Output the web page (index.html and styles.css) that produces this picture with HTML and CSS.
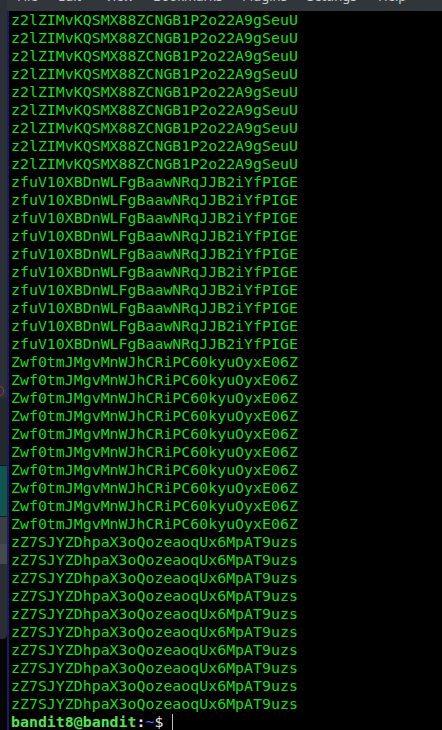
FILE: index.html
```html
<!DOCTYPE html>
<html>
<head>
<meta charset="utf-8">
<link rel="stylesheet" href="styles.css">
</head>
<body>
<div class="screen">
  <div class="desk">
    <div class="seg s1"></div>
    <div class="seg s2"><span class="redmark"></span></div>
    <div class="seg s3"></div>
    <div class="seg s4"></div>
    <div class="seg s5"></div>
    <div class="seg s6"></div>
    <div class="seg s7"></div>
    <div class="seg s8"></div>
  </div>
  <div class="window">
    <div class="menubar">
      <span class="mi m-file">File</span>
      <span class="mi m-edit">Edit</span>
      <span class="mi m-view">View</span>
      <span class="mi m-book">Bookmarks</span>
      <span class="mi m-plug">Plugins</span>
      <span class="mi m-set">Settings</span>
      <span class="mi m-help">Help</span>
    </div>
    <div class="term">
      <div class="line">z2lZIMvKQSMX88ZCNGB1P2o22A9gSeuU</div>
      <div class="line">z2lZIMvKQSMX88ZCNGB1P2o22A9gSeuU</div>
      <div class="line">z2lZIMvKQSMX88ZCNGB1P2o22A9gSeuU</div>
      <div class="line">z2lZIMvKQSMX88ZCNGB1P2o22A9gSeuU</div>
      <div class="line">z2lZIMvKQSMX88ZCNGB1P2o22A9gSeuU</div>
      <div class="line">z2lZIMvKQSMX88ZCNGB1P2o22A9gSeuU</div>
      <div class="line">z2lZIMvKQSMX88ZCNGB1P2o22A9gSeuU</div>
      <div class="line">z2lZIMvKQSMX88ZCNGB1P2o22A9gSeuU</div>
      <div class="line">z2lZIMvKQSMX88ZCNGB1P2o22A9gSeuU</div>
      <div class="line">zfuV10XBDnWLFgBaawNRqJJB2iYfPIGE</div>
      <div class="line">zfuV10XBDnWLFgBaawNRqJJB2iYfPIGE</div>
      <div class="line">zfuV10XBDnWLFgBaawNRqJJB2iYfPIGE</div>
      <div class="line">zfuV10XBDnWLFgBaawNRqJJB2iYfPIGE</div>
      <div class="line">zfuV10XBDnWLFgBaawNRqJJB2iYfPIGE</div>
      <div class="line">zfuV10XBDnWLFgBaawNRqJJB2iYfPIGE</div>
      <div class="line">zfuV10XBDnWLFgBaawNRqJJB2iYfPIGE</div>
      <div class="line">zfuV10XBDnWLFgBaawNRqJJB2iYfPIGE</div>
      <div class="line">zfuV10XBDnWLFgBaawNRqJJB2iYfPIGE</div>
      <div class="line">zfuV10XBDnWLFgBaawNRqJJB2iYfPIGE</div>
      <div class="line">Zwf0tmJMgvMnWJhCRiPC60kyuOyxE06Z</div>
      <div class="line">Zwf0tmJMgvMnWJhCRiPC60kyuOyxE06Z</div>
      <div class="line">Zwf0tmJMgvMnWJhCRiPC60kyuOyxE06Z</div>
      <div class="line">Zwf0tmJMgvMnWJhCRiPC60kyuOyxE06Z</div>
      <div class="line">Zwf0tmJMgvMnWJhCRiPC60kyuOyxE06Z</div>
      <div class="line">Zwf0tmJMgvMnWJhCRiPC60kyuOyxE06Z</div>
      <div class="line">Zwf0tmJMgvMnWJhCRiPC60kyuOyxE06Z</div>
      <div class="line">Zwf0tmJMgvMnWJhCRiPC60kyuOyxE06Z</div>
      <div class="line">Zwf0tmJMgvMnWJhCRiPC60kyuOyxE06Z</div>
      <div class="line">Zwf0tmJMgvMnWJhCRiPC60kyuOyxE06Z</div>
      <div class="line">zZ7SJYZDhpaX3oQozeaoqUx6MpAT9uzs</div>
      <div class="line">zZ7SJYZDhpaX3oQozeaoqUx6MpAT9uzs</div>
      <div class="line">zZ7SJYZDhpaX3oQozeaoqUx6MpAT9uzs</div>
      <div class="line">zZ7SJYZDhpaX3oQozeaoqUx6MpAT9uzs</div>
      <div class="line">zZ7SJYZDhpaX3oQozeaoqUx6MpAT9uzs</div>
      <div class="line">zZ7SJYZDhpaX3oQozeaoqUx6MpAT9uzs</div>
      <div class="line">zZ7SJYZDhpaX3oQozeaoqUx6MpAT9uzs</div>
      <div class="line">zZ7SJYZDhpaX3oQozeaoqUx6MpAT9uzs</div>
      <div class="line">zZ7SJYZDhpaX3oQozeaoqUx6MpAT9uzs</div>
      <div class="line">zZ7SJYZDhpaX3oQozeaoqUx6MpAT9uzs</div>
      <div class="line prompt"><span class="user">bandit8@bandit</span><span class="sep">:</span><span class="path">~</span><span class="dollar">$&nbsp;</span><span class="cursor"></span></div>
    </div>
  </div>
</div>
</body>
</html>
```

FILE: styles.css
```css
html, body {
  margin: 0;
  padding: 0;
  background: #000;
  width: 442px;
  height: 730px;
  overflow: hidden;
}

.screen {
  display: flex;
  width: 442px;
  height: 730px;
}

.desk {
  width: 7px;
  flex: none;
  display: flex;
  flex-direction: column;
}

.seg { flex: none; position: relative; overflow: hidden; }
.s1 { height: 385px; background: #2b3036; }
.s2 { height: 13px; background: #2b3036; }
.redmark {
  position: absolute;
  left: -4px;
  top: 1px;
  width: 8px;
  height: 10px;
  border-radius: 50%;
  border: 1px solid #9a3a44;
  box-sizing: border-box;
}
.s3 { height: 67px; background: #25292e; border-bottom: 1px solid #15181b; }
.s4 { height: 50px; background: #0f5550; border-bottom: 1px solid #1a1d20; }
.s5 { height: 27px; background: #3b3e43; }
.s6 { height: 20px; background: #46494e; }
.s7 { height: 75px; background: #2a2d32; border-bottom-right-radius: 4px; }
.s8 { flex: 1; background: #070707; }

.window {
  flex: 1;
  display: flex;
  flex-direction: column;
  min-width: 0;
}

.menubar {
  height: 11px;
  flex: none;
  background: #31363b;
  display: flex;
  overflow: hidden;
  font-family: "Noto Sans", sans-serif;
  font-size: 13px;
  color: #c8cacc;
  padding-left: 10px;
}

.mi {
  display: block;
  flex: none;
  line-height: 18px;
  height: 18px;
  margin-top: -13px;
  white-space: nowrap;
}
.m-file { width: 41px; }
.m-edit { width: 47px; }
.m-view { width: 48px; }
.m-book { width: 89px; }
.m-plug { width: 65px; }
.m-set { width: 71px; }
.m-help { width: 40px; }

.term {
  flex: 1;
  border-left: 2px solid #1b1b68;
  padding-left: 2px;
  background: #000;
  font-family: "DejaVu Sans Mono", monospace;
  font-size: 14.9px;
  line-height: 18px;
  color: #1adc1a;
  overflow: hidden;
}

.line { height: 18px; white-space: pre; }

.prompt { font-weight: bold; display: flex; align-items: center; }
.user { color: #4fe84f; }
.sep { color: #e6e6e6; }
.path { color: #5a5aff; font-weight: normal; }
.dollar { color: #e6e6e6; font-weight: normal; }
.cursor {
  width: 1px;
  height: 16px;
  background: #bdbdbd;
}
```
